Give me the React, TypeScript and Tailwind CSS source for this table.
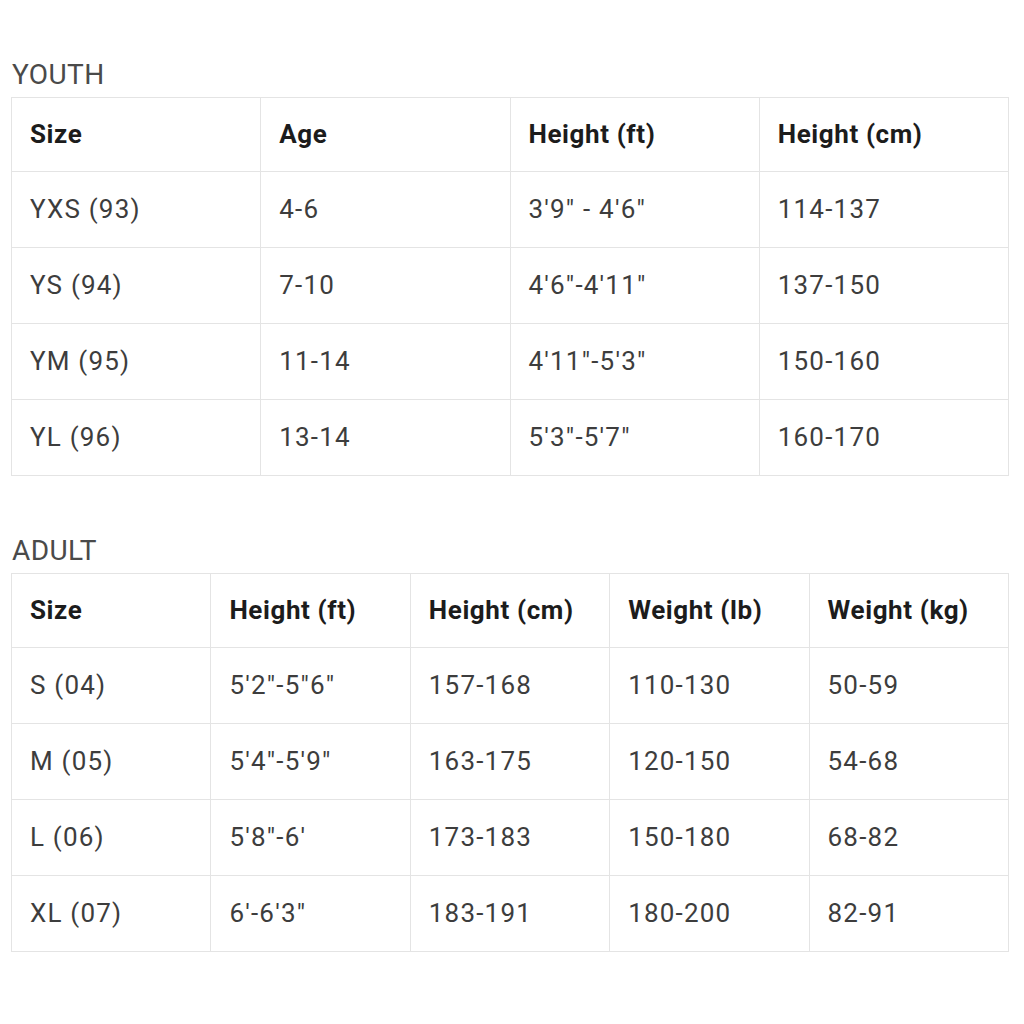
const youth = {
  label: 'YOUTH',
  head: ['Size', 'Age', 'Height (ft)', 'Height (cm)'],
  rows: [
    ['YXS (93)', '4-6', '3\'9" - 4\'6"', '114-137'],
    ['YS (94)', '7-10', '4\'6"-4\'11"', '137-150'],
    ['YM (95)', '11-14', '4\'11"-5\'3"', '150-160'],
    ['YL (96)', '13-14', '5\'3"-5\'7"', '160-170'],
  ],
};

const adult = {
  label: 'ADULT',
  head: ['Size', 'Height (ft)', 'Height (cm)', 'Weight (lb)', 'Weight (kg)'],
  rows: [
    ['S (04)', '5\'2"-5"6"', '157-168', '110-130', '50-59'],
    ['M (05)', '5\'4"-5\'9"', '163-175', '120-150', '54-68'],
    ['L (06)', '5\'8"-6\'', '173-183', '150-180', '68-82'],
    ['XL (07)', '6\'-6\'3"', '183-191', '180-200', '82-91'],
  ],
};

function SizeTable({ data }: { data: typeof youth }) {
  return (
    <section>
      <h2 className="h-[40px] text-[28px] leading-[36px] text-[#4a4a4a] tracking-[0.4px] pl-px">{data.label}</h2>
      <table className="w-[998px] table-fixed border-collapse">
        <thead>
          <tr className="h-[74px]">
            {data.head.map((h) => (
              <th key={h} className="border border-[#e4e4e4] pl-[18px] text-left text-[26px] font-bold text-[#1c1c1c] tracking-[0.6px]">
                {h}
              </th>
            ))}
          </tr>
        </thead>
        <tbody>
          {data.rows.map((row, i) => (
            <tr key={i} className="h-[76px]">
              {row.map((c, j) => (
                <td key={j} className="border border-[#e4e4e4] pl-[18px] text-[26px] text-[#3d3d3d] tracking-[1.2px]">
                  {c}
                </td>
              ))}
            </tr>
          ))}
        </tbody>
      </table>
    </section>
  );
}

export default function App() {
  return (
    <div className="w-[1024px] h-[1024px] bg-white pt-[57px] pl-[11px] font-['Roboto',sans-serif]">
      <SizeTable data={youth} />
      <div className="h-[57px]" />
      <SizeTable data={adult} />
    </div>
  );
}
